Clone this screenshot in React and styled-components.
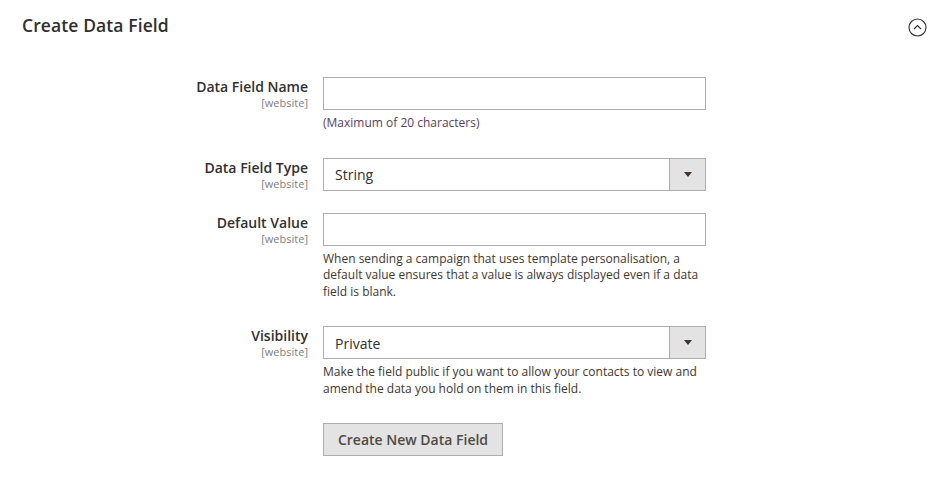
import React from 'react'
import styled, { createGlobalStyle } from 'styled-components'

const Global = createGlobalStyle`
  body {
    margin: 0;
    background: #fff;
    font-family: 'Open Sans', 'Liberation Sans', sans-serif;
    color: #303030;
  }
`

const fields = [
  { label: 'Data Field Name', kind: 'input', note: '(Maximum of 20 characters)', accent: true },
  { label: 'Data Field Type', kind: 'select', value: 'String' },
  {
    label: 'Default Value',
    kind: 'input',
    note: 'When sending a campaign that uses template personalisation, a default value ensures that a value is always displayed even if a data field is blank.',
  },
  {
    label: 'Visibility',
    kind: 'select',
    value: 'Private',
    note: 'Make the field public if you want to allow your contacts to view and amend the data you hold on them in this field.',
  },
]

export default () => {
  return (
    <Page>
      <Global />
      <Header>
        <Title>Create Data Field</Title>
        <Toggle>
          <svg width="19" height="19" viewBox="0 0 19 19">
            <circle cx="9.5" cy="9.5" r="8.5" fill="none" stroke="#303030" strokeWidth="1.1" />
            <path d="M6 11 L9.5 7.5 L13 11" fill="none" stroke="#303030" strokeWidth="1.1" />
          </svg>
        </Toggle>
      </Header>
      <Form>
        {fields.map((f) => (
          <Field key={f.label}>
            <Label>
              <LabelText>{f.label}</LabelText>
              <Scope>[website]</Scope>
            </Label>
            <Control>
              {f.kind === 'input' ? (
                <TextInput type="text" />
              ) : (
                <Select>
                  <SelectValue>{f.value}</SelectValue>
                  <Arrow>
                    <Caret />
                  </Arrow>
                </Select>
              )}
              {f.note && <Note $accent={f.accent}>{f.note}</Note>}
            </Control>
          </Field>
        ))}
        <Field>
          <Label />
          <Control>
            <Button>Create New Data Field</Button>
          </Control>
        </Field>
      </Form>
    </Page>
  )
}

const Page = styled.div`
  width: 946px;
  height: 486px;
  box-sizing: border-box;
  padding: 0 0 0 22px;
`

const Header = styled.div`
  display: flex;
  align-items: center;
  justify-content: space-between;
  height: 50px;
  padding-right: 19px;
`

const Title = styled.h2`
  margin: 0 0 1px;
  font-size: 17.5px;
  font-weight: 600;
  color: #303030;
  letter-spacing: 0.1px;
`

const Toggle = styled.div`
  display: flex;
  margin-top: 4px;
`

const Form = styled.div`
  display: flex;
  flex-direction: column;
  gap: 22px;
  padding-top: 27px;
`

const Field = styled.div`
  display: flex;
  align-items: flex-start;
  gap: 15px;
`

const Label = styled.div`
  width: 286px;
  display: flex;
  flex-direction: column;
  align-items: flex-end;
`

const LabelText = styled.span`
  font-size: 14px;
  font-weight: 600;
  line-height: 18px;
  margin-top: 1px;
  color: #303030;
`

const Scope = styled.span`
  font-size: 11px;
  line-height: 13px;
  color: #808080;
`

const Control = styled.div`
  width: 383px;
  display: flex;
  flex-direction: column;
`

const TextInput = styled.input`
  box-sizing: border-box;
  width: 100%;
  height: 33px;
  margin: 0;
  border: 1px solid #adadad;
  background: #fff;
  padding: 0 11px;
  font: inherit;
  font-size: 14px;
  outline: none;
`

const Select = styled.div`
  box-sizing: border-box;
  width: 100%;
  height: 33px;
  border: 1px solid #adadad;
  display: flex;
  align-items: stretch;
`

const SelectValue = styled.span`
  flex: 1;
  display: flex;
  align-items: center;
  padding-left: 11px;
  padding-top: 1px;
  font-size: 14px;
  color: #303030;
`

const Arrow = styled.span`
  width: 35px;
  background: #e3e3e3;
  border-left: 1px solid #adadad;
  display: flex;
  align-items: center;
  justify-content: center;
`

const Caret = styled.span`
  width: 0;
  height: 0;
  border-left: 4px solid transparent;
  border-right: 4px solid transparent;
  border-top: 5px solid #41362f;
`

const Note = styled.div`
  margin: 5px 0 4px;
  font-size: 12px;
  line-height: 16.5px;
  color: ${(p) => (p.$accent ? '#5c3d5b' : '#41362f')};
`

const Button = styled.button`
  box-sizing: border-box;
  width: 180px;
  height: 33px;
  margin: 0;
  border: 1px solid #adadad;
  background: #e3e3e3;
  font-family: inherit;
  font-size: 14px;
  font-weight: 600;
  color: #514943;
  padding: 0;
`
